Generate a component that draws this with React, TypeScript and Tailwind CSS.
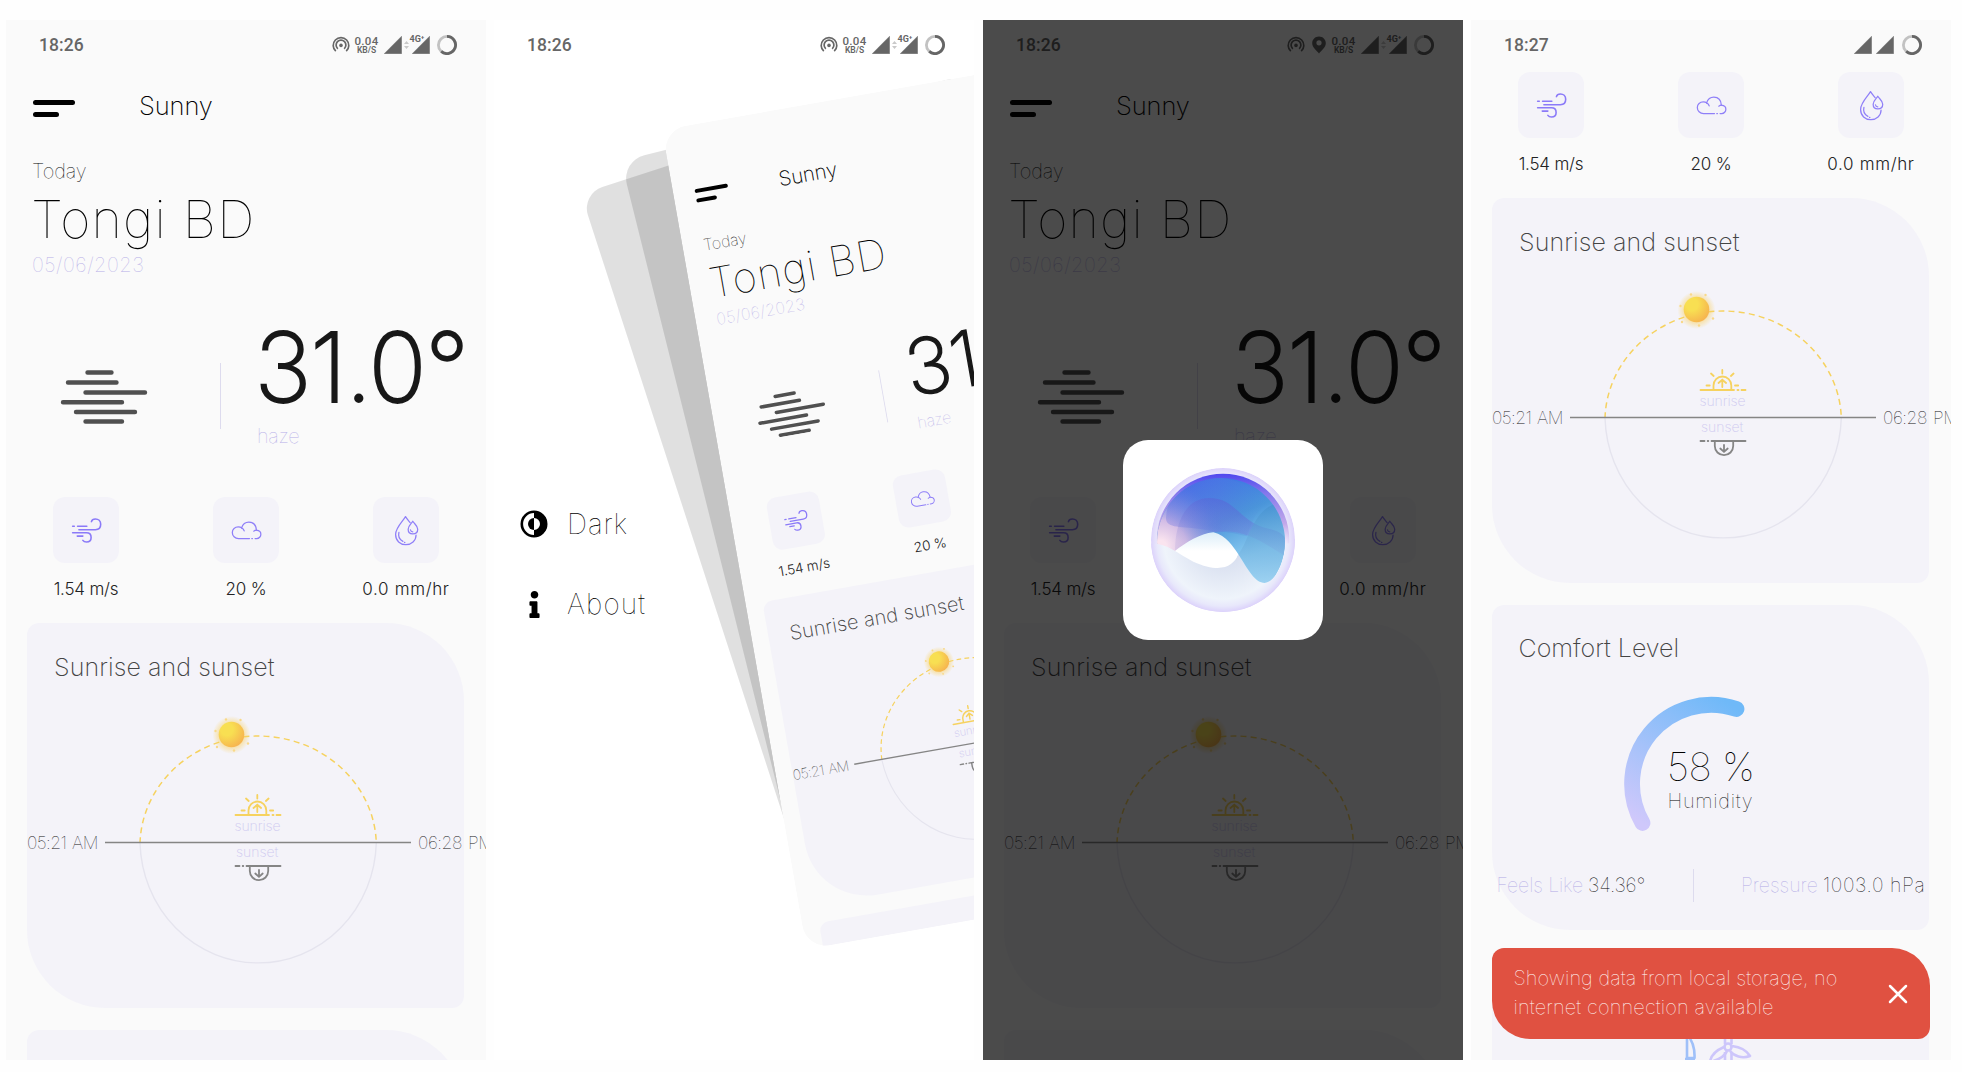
import React from 'react';
import { FaInfo } from 'react-icons/fa';

function HotspotIcon() {
  return (
    <svg viewBox="0 0 18 18" className="h-[18px] w-[18px]" fill="none" stroke="#666" strokeWidth="1.7">
      <path d="M3.8 15.2A7.8 7.8 0 1 1 14.2 15.2" />
      <path d="M5.8 12.8A4.9 4.9 0 1 1 12.2 12.8" />
      <circle cx="9" cy="9.4" r="1.8" fill="#666" stroke="none" />
    </svg>
  );
}

function PinIcon() {
  return (
    <svg viewBox="0 0 14 18" className="h-[18px] w-[14px]">
      <path fillRule="evenodd" fill="#666" d="M7 0.5C3.2 0.5 0.2 3.4 0.2 7.2C0.2 11.4 4.6 14.2 7 17.5C9.4 14.2 13.8 11.4 13.8 7.2C13.8 3.4 10.8 0.5 7 0.5ZM7 4.2A2.6 2.6 0 1 1 7 9.4A2.6 2.6 0 1 1 7 4.2Z" />
    </svg>
  );
}

function Signal() {
  return (
    <svg viewBox="0 0 18 18" className="h-[18px] w-[18px] shrink-0">
      <path d="M17.6 0.2V17.7H0.2Z" fill="#666" stroke="#666" strokeWidth="0.4" strokeLinejoin="round" />
    </svg>
  );
}

function BatteryRing() {
  return (
    <svg viewBox="0 0 20 20" className="h-5 w-5 shrink-0" fill="none" strokeWidth="2.8">
      <circle cx="10" cy="10" r="8.6" stroke="#c2c2c2" />
      <path d="M10 1.4A8.6 8.6 0 1 1 4.2 16.4" stroke="#666" />
    </svg>
  );
}

function StatusBar({ time, pin = false, simple = false }: { time: string; pin?: boolean; simple?: boolean }) {
  return (
    <div className="flex h-[50px] w-[480px] shrink-0 items-center pr-[29.5px] pl-[33px] font-[Roboto] text-[#666]">
      <span className="text-[17.5px] leading-5 font-medium tracking-[0.1px]">{time}</span>
      <div className="ml-auto flex items-center">
        {!simple && (
          <>
            <HotspotIcon />
            {pin && <span className="ml-[7px]"><PinIcon /></span>}
            <span className={pin ? 'ml-[5px] w-[26px] text-center' : 'ml-[4px] w-[26px] text-center'}>
              <span className="block text-[11.5px] leading-[9px] font-medium tracking-[0.3px]">0.04</span>
              <span className="block text-[8.5px] leading-[8px] font-semibold">KB/S</span>
            </span>
            <span className="ml-1 flex"><Signal /></span>
            <svg viewBox="0 0 5 8" className="ml-[2px] h-2 w-[5px]" fill="#c9c9c9">
              <path d="M2.5 0L5 3H0ZM2.5 8L0 5H5Z" />
            </svg>
            <span className="relative ml-[3px] flex">
              <Signal />
              <span className="absolute -top-[1px] -left-[2px] text-[9px] leading-[9px] font-bold">4G⁺</span>
            </span>
            <span className="ml-[7px] flex"><BatteryRing /></span>
          </>
        )}
        {simple && (
          <>
            <Signal />
            <span className="ml-1 flex"><Signal /></span>
            <span className="ml-[8px] flex"><BatteryRing /></span>
          </>
        )}
      </div>
    </div>
  );
}

function WindIcon() {
  return (
    <svg viewBox="118 101 100 100" className="h-[33px] w-[33px]" fill="none" stroke="#8b7af8" strokeWidth="4.8" strokeLinecap="round">
      <path d="M126 138H131M141 138H169M145 148.5H195C205 148.5 211 142 211 132C211 122 204 116 195 116C188 116 184 120 183 124" />
      <path d="M126 158H168C177 158 182 163 182 172C182 181 177 186 168 186C162 186 159 184 157 181M140 168H157" />
    </svg>
  );
}

function CloudIcon() {
  return (
    <svg viewBox="598 101 100 100" className="h-[33px] w-[33px]" fill="none" stroke="#8f7ff8" strokeWidth="3.8" strokeLinecap="round">
      <path d="M657 175.5H624C613 175.5 605 167 605 157C605 147 613 140 623 140C627 140 631 141 633 143C637 131 645 125.5 655 125.5C668 125.5 677 135 678 150C686 151 691.5 156 691.5 162C691.5 169 686 175.5 679 175.5H674" />
      <path d="M633 143C637 145 640 148 641 152M670 153C673 151 675 150 678 150M664 175.5H666" />
    </svg>
  );
}

function DropsIcon() {
  return (
    <svg viewBox="1078 101 100 100" className="h-[33px] w-[33px]" fill="none" stroke="#8f7ff8" strokeWidth="3.8" strokeLinecap="round" strokeLinejoin="round">
      <path d="M1139 127C1134 121 1130 117 1125 109C1118 122 1095 142 1095 163C1095 182 1109 194 1126 194C1143 194 1157 182 1157 165" />
      <path d="M1147 123C1142 131 1133 137 1133 147C1133 156 1139 161 1147 161C1155 161 1162 156 1162 147C1162 137 1152 131 1147 123Z" />
      <path d="M1105 157C1102 170 1109 180 1117 184M1122 187H1123M1140 149C1141 153 1143 155 1147 155" />
    </svg>
  );
}

function Stats() {
  const items = [
    { icon: <WindIcon />, label: '1.54 m/s', cls: 'tracking-[-0.2px]' },
    { icon: <CloudIcon />, label: '20 %', cls: 'tracking-[-0.2px]' },
    { icon: <DropsIcon />, label: '0.0 mm/hr', cls: 'tracking-[0.65px]' },
  ];
  return (
    <div className="grid w-[480px] grid-cols-3">
      {items.map((it) => (
        <div key={it.label} className="flex flex-col items-center">
          <div className="flex h-[66px] w-[66px] items-center justify-center rounded-[12px] bg-[#f4f3f9]">{it.icon}</div>
          <span className={`mt-[16px] text-[17px] leading-5 font-light whitespace-nowrap text-[#222] ${it.cls}`}>{it.label}</span>
        </div>
      ))}
    </div>
  );
}

function SunChart() {
  return (
    <svg viewBox="0 0 437 384" className="absolute inset-0 h-[384px] w-[437px]" fill="none">
      <defs>
        <radialGradient id="sunBody" cx="0.32" cy="0.3" r="0.8">
          <stop offset="0.3" stopColor="#f8df52" />
          <stop offset="1" stopColor="#f6b04e" />
        </radialGradient>
        <radialGradient id="sunGlow">
          <stop offset="0.6" stopColor="#f9cf5a" stopOpacity="0.55" />
          <stop offset="1" stopColor="#f9cf5a" stopOpacity="0" />
        </radialGradient>
      </defs>
      <path d="M113 220A118.2 123.500 0 0 0 349.3 220" stroke="#e5e4ee" strokeWidth="1.4" />
      <path d="M113 220A118.2 113 0 0 1 349.3 220" transform="translate(0 5.500) scale(1 0.975)" stroke="#f6d25f" strokeWidth="1.5" strokeDasharray="6 4.2" />
      <path d="M78 219.5H384" stroke="#858585" strokeWidth="1.6" />
      <circle cx="204.5" cy="112" r="19" fill="url(#sunGlow)" />
      <g fill="#f9d98a">
        <circle cx="199" cy="96.5" r="1.2" /><circle cx="213.5" cy="97" r="1.2" /><circle cx="188.5" cy="108" r="1.2" />
        <circle cx="190" cy="124" r="1.2" /><circle cx="221" cy="120.5" r="1.2" /><circle cx="207" cy="127.5" r="1.2" />
      </g>
      <circle cx="204.5" cy="111.5" r="12.8" fill="url(#sunBody)" />
      <g stroke="#f6d25f" strokeWidth="1.8" strokeLinecap="round">
        <path d="M208.5 192H242M245.5 192H246.5M249.5 192H253.5" />
        <path d="M221.5 191V187.5A8.9 9 0 0 1 239.3 187.5V191" />
        <path d="M230.3 189V182.5M226.5 185L230.3 181.7L234.1 185" />
        <path d="M230.3 172V175.5M219 175.5L221.7 178M241.6 175.5L238.9 178M214.5 187.5H217.7M243 187.5H246.2" />
      </g>
      <g stroke="#858585" strokeWidth="1.8" strokeLinecap="round">
        <path d="M208.5 243H212.5M215.7 243H216.3M219.5 243H253.5" />
        <path d="M222.8 243.5V248A9.2 9.2 0 0 0 241.2 248V243.5" />
        <path d="M232 247V253.5M228.3 250.5L232 253.8L235.7 250.5" />
      </g>
    </svg>
  );
}

function SunCard() {
  return (
    <div className="relative ml-[21px] flex h-[384.5px] w-[437px] shrink-0 flex-col rounded-[12px] rounded-tr-[78px] rounded-bl-[78px] bg-[#f4f3f9]">
      <SunChart />
      <h2 className="mt-[29px] ml-[27px] text-[25px] leading-[30px] font-extralight tracking-[0.1px] whitespace-nowrap text-[#444]">Sunrise and sunset</h2>
      <span className="mt-[136px] ml-[207.5px] text-[14px] leading-4 font-extralight tracking-[-0.1px] text-[#cfcaf0]">sunrise</span>
      <div className="flex h-[18px] items-center justify-between whitespace-nowrap">
        <span className="w-[76px] text-[17.5px] leading-[18px] font-thin tracking-[-0.6px] text-[#111] [word-spacing:1.5px]">05:21 AM</span>
        <span className="-mr-[30px] w-[76px] text-[17.5px] leading-[18px] font-thin tracking-[-0.45px] text-[#111] [word-spacing:1.5px]">06:28 PM</span>
      </div>
      <span className="-mt-[8px] ml-[209px] text-[14px] leading-4 font-extralight text-[#cfcaf0]">sunset</span>
    </div>
  );
}

function HazeIcon() {
  return (
    <svg viewBox="0 0 88 56" className="h-[56px] w-[88px]" stroke="#505050" strokeWidth="4.4" strokeLinecap="round">
      <path d="M27.5 4.5H51.5M8 14.5H56.5M25.5 24.5H85M3 34.3H62M16 44H75M25.5 53.5H62" />
    </svg>
  );
}

function Home({ status }: { status?: React.ReactNode }) {
  return (
    <div className="flex h-[1040px] w-[480px] flex-col overflow-hidden bg-[#fafafa] text-black">
      {status ?? <div className="h-[50px] shrink-0" />}
      <header className="mt-5 flex h-8 shrink-0 items-center pl-[27px]">
        <div className="mt-[5px] flex flex-col gap-[7px]">
          <span className="h-[5px] w-[42px] rounded-full bg-black" />
          <span className="h-[5px] w-[26px] rounded-full bg-black" />
        </div>
        <span className="ml-[64px] text-[25.5px] leading-8 font-extralight tracking-[-0.1px]">Sunny</span>
      </header>
      <div className="mt-[37px] flex flex-col pl-[26px] whitespace-nowrap">
        <span className="text-[20px] leading-6 font-thin tracking-[-0.1px]">Today</span>
        <span className="mt-[7px] -ml-px text-[52px] leading-[60px] font-thin tracking-[1.2px]">Tongi BD</span>
        <span className="mt-[3px] text-[20px] leading-6 font-thin tracking-[0.5px] text-[#b7afe8]">05/06/2023</span>
      </div>
      <div className="mt-[40px] flex h-[131px] shrink-0 items-start">
        <div className="mt-[51px] ml-[54px]"><HazeIcon /></div>
        <div className="mt-[46px] ml-[72px] h-[66px] w-px bg-[#dddbee]" />
        <div className="ml-[35px] flex flex-col whitespace-nowrap">
          <span className="-ml-[1.5px] text-[96px] leading-[100px] font-[250] tracking-[-1.2px] text-[#181818] [-webkit-text-stroke:1.8px_#181818]">31.0°</span>
          <span className="mt-[7px] ml-[1px] text-[20px] leading-6 font-thin tracking-[-0.4px] text-[#b7afe8]">haze</span>
        </div>
      </div>
      <div className="mt-[49px]"><Stats /></div>
      <div className="mt-[24px] shrink-0"><SunCard /></div>
      <div className="mt-[22px] ml-[21px] h-[320px] w-[437px] shrink-0 rounded-[12px] rounded-tr-[78px] rounded-bl-[78px] bg-[#f4f3f9]" />
    </div>
  );
}

function MenuPanel() {
  return (
    <section className="relative h-[1040px] w-[480px] shrink-0 overflow-hidden bg-white">
      <div className="flex flex-col">
        <StatusBar time="18:26" />
        <nav className="mt-[437px] flex flex-col gap-[48px] pl-[26px] text-[28px] leading-8 font-thin">
          <span className="flex items-center">
            <svg viewBox="0 0 28 28" className="h-7 w-7">
              <circle cx="14" cy="14" r="12.2" fill="#fff" stroke="#000" strokeWidth="2.6" />
              <path d="M14 1A13 13 0 0 1 14 27V20A6 6 0 0 0 14 8Z" />
              <path d="M14 8A6 6 0 0 0 14 20Z" />
            </svg>
            <span className="mt-[1px] ml-[19px] tracking-[0.9px]">Dark</span>
          </span>
          <span className="flex items-center">
            <span className="flex w-7 justify-center"><FaInfo size={27} /></span>
            <span className="ml-[19px] tracking-[1.1px]">About</span>
          </span>
        </nav>
      </div>
      <div className="absolute top-[174px] left-[87px] h-[1040px] w-[480px] origin-top-left scale-[0.7] -rotate-[18deg] rounded-[32px] bg-black/12" />
      <div className="absolute top-[141px] left-[126.5px] h-[1040px] w-[480px] origin-top-left scale-[0.75] -rotate-[14deg] rounded-[32px] bg-black/12" />
      <div className="absolute top-[110px] left-[167.5px] origin-top-left scale-[0.8] -rotate-[10deg] overflow-hidden rounded-[30px]">
        <Home />
      </div>
    </section>
  );
}

function Orb() {
  return (
    <svg viewBox="153 113 432 432" className="h-36 w-36">
      <defs>
        <clipPath id="orbOuter"><circle cx="369" cy="329" r="216" /></clipPath>
        <clipPath id="orbInner"><circle cx="363" cy="335" r="192" /></clipPath>
        <radialGradient id="halo"><stop offset="0.88" stopColor="#fff" /><stop offset="0.93" stopColor="#e6e3fb" /><stop offset="1" stopColor="#dcd2fb" /></radialGradient>
        <linearGradient id="rim" x1="0" y1="0" x2="0" y2="1"><stop offset="0" stopColor="#4f48ee" /><stop offset="0.15" stopColor="#8478ec" /><stop offset="0.38" stopColor="#c3a9ea" /><stop offset="0.62" stopColor="#e6dcf8" stopOpacity="0" /></linearGradient>
        <linearGradient id="sky" x1="0.4" y1="0" x2="0.75" y2="0.85"><stop offset="0" stopColor="#3264ea" /><stop offset="0.12" stopColor="#3d72e6" /><stop offset="0.42" stopColor="#4a96da" /><stop offset="0.75" stopColor="#8ccdf1" /><stop offset="1" stopColor="#a4d8f5" /></linearGradient>
        <radialGradient id="blush" gradientUnits="userSpaceOnUse" cx="180" cy="350" r="200"><stop offset="0.1" stopColor="#fae4ef" /><stop offset="0.4" stopColor="#e3c3e6" stopOpacity="0.9" /><stop offset="0.75" stopColor="#9f9ae4" stopOpacity="0.4" /><stop offset="1" stopColor="#5b78e6" stopOpacity="0" /></radialGradient>
        <linearGradient id="dome" gradientUnits="userSpaceOnUse" x1="340" y1="203" x2="300" y2="350"><stop offset="0" stopColor="#5b5fd6" stopOpacity="0.45" /><stop offset="0.55" stopColor="#7378d8" stopOpacity="0.35" /><stop offset="1" stopColor="#b9a9dc" stopOpacity="0.3" /></linearGradient>
        <linearGradient id="band" gradientUnits="userSpaceOnUse" x1="190" y1="0" x2="520" y2="0"><stop offset="0" stopColor="#6f74e0" stopOpacity="0.35" /><stop offset="0.5" stopColor="#5b7be0" stopOpacity="0.4" /><stop offset="1" stopColor="#4a8fd8" stopOpacity="0" /></linearGradient>
        <linearGradient id="lobe" gradientUnits="userSpaceOnUse" x1="0" y1="220" x2="0" y2="458"><stop offset="0" stopColor="#3f8ccb" stopOpacity="0.5" /><stop offset="1" stopColor="#9bd0f0" stopOpacity="0.8" /></linearGradient>
        <linearGradient id="lens" x1="0" y1="0" x2="0" y2="1"><stop offset="0" stopColor="#dceef9" /><stop offset="0.5" stopColor="#fff" /></linearGradient>
        <radialGradient id="bowl" gradientUnits="userSpaceOnUse" cx="369" cy="329" r="216"><stop offset="0.3" stopColor="#d9e0f0" /><stop offset="0.82" stopColor="#eff4fb" /><stop offset="0.92" stopColor="#e8e8fb" /><stop offset="1" stopColor="#dcd2fb" /></radialGradient>
      </defs>
      <g clipPath="url(#orbOuter)">
        <circle cx="369" cy="329" r="216" fill="url(#halo)" />
        <circle cx="369" cy="329" r="199" fill="url(#rim)" />
        <g clipPath="url(#orbInner)">
          <path d="M150 540V110H580V540Z" fill="url(#sky)" />
          <path d="M150 540V110H580V540Z" fill="url(#blush)" />
          <path d="M198 262C200 225 215 190 245 170C320 110 460 150 520 225C470 220 455 280 440 318C410 310 385 303 342 305C300 290 225 295 208 282C200 277 198 270 198 262Z" fill="url(#band)" />
          <path d="M225 362C225 290 250 203 328 203C410 203 420 280 510 296C535 303 550 310 560 330V380C500 345 450 303 370 303C310 303 270 330 225 362Z" fill="url(#dome)" />
          <path d="M560 215C490 215 465 270 442 320C432 345 425 358 415 372C440 410 465 458 494 458C525 455 555 400 560 330Z" fill="url(#lobe)" />
        </g>
        <path d="M222 364C260 335 300 310 340 306C380 316 400 350 415 372C408 410 375 420 340 418C300 412 250 385 222 364Z" fill="url(#lens)" />
        <path d="M150 340C195 335 230 368 280 394C360 430 400 410 415 372C445 420 465 458 494 458C525 455 552 400 557 340C575 340 580 330 590 320V550H150Z" fill="url(#bowl)" />
      </g>
    </svg>
  );
}

function ComfortCard() {
  return (
    <div className="relative ml-[21px] flex h-[325px] w-[437px] shrink-0 flex-col rounded-[12px] rounded-tr-[78px] rounded-bl-[78px] bg-[#f4f3f9] whitespace-nowrap">
      <svg viewBox="0 0 437 325" className="absolute inset-0 h-[325px] w-[437px]" fill="none">
        <defs>
          <linearGradient id="gauge" gradientUnits="userSpaceOnUse" x1="160" y1="225" x2="240" y2="100">
            <stop offset="0" stopColor="#cfc8fb" />
            <stop offset="0.45" stopColor="#a5c2fa" />
            <stop offset="1" stopColor="#6fb9f8" />
          </linearGradient>
        </defs>
        <path d="M150.5 218A79 79 0 0 1 244.5 104" stroke="url(#gauge)" strokeWidth="15.8" strokeLinecap="round" />
      </svg>
      <h2 className="mt-[28px] ml-[26.5px] text-[25px] leading-[30px] font-extralight text-[#444]">Comfort Level</h2>
      <span className="mt-[80px] ml-[175px] text-[39px] leading-[48px] font-thin tracking-[-0.4px]">58 %</span>
      <span className="-mt-[2px] ml-[175.5px] text-[20px] leading-6 font-thin tracking-[0.7px]">Humidity</span>
      <div className="mt-[56px] flex h-[33px] items-center text-[19.5px] font-thin">
        <span className="ml-[4.5px] w-[91.5px] tracking-[-0.1px] text-[#b3abe6]">Feels Like</span>
        <span className="w-[105px] tracking-[-0.2px]">34.36°</span>
        <span className="h-[33px] w-px bg-[#dddbee]" />
        <span className="ml-[47px] w-[82px] text-[#b3abe6]">Pressure</span>
        <span className="tracking-[0.6px]">1003.0 hPa</span>
      </div>
    </div>
  );
}

function Alert() {
  return (
    <div className="absolute top-[928px] left-[21px] flex h-[91px] w-[438px] items-center rounded-[12px] rounded-tr-[38px] rounded-bl-[38px] bg-[#e05141] pr-[22px] pl-[21.5px] text-white">
      <p className="-mt-[1px] w-[350px] text-[20px] leading-[29.5px] font-thin tracking-[0.05px] whitespace-nowrap">
        Showing data from local storage, no
        <br />
        <span className="tracking-[0.15px]">internet connection available</span>
      </p>
      <svg viewBox="0 0 20 20" className="ml-auto h-5 w-5" stroke="#fff" strokeWidth="2.5" strokeLinecap="round">
        <path d="M2 2L18 18M18 2L2 18" />
      </svg>
    </div>
  );
}

function ScrolledPanel() {
  return (
    <section className="relative flex h-[1040px] w-[480px] shrink-0 flex-col overflow-hidden bg-[#fafafa] text-black">
      <StatusBar time="18:27" simple />
      <div className="mt-[2px]"><Stats /></div>
      <div className="mt-[24px] shrink-0"><SunCard /></div>
      <div className="mt-[22.5px] shrink-0"><ComfortCard /></div>
      <div className="mt-[22px] ml-[21px] h-[300px] w-[437px] shrink-0 rounded-[12px] rounded-tr-[78px] bg-[#f4f3f9]">
        <svg viewBox="0 0 437 110" className="h-[110px] w-[437px]" fill="none" strokeWidth="2.6" strokeLinejoin="round">
          <path d="M195 82V106H202.5C203 96 200 88 195 82ZM193 107H203" stroke="#9fc0f9" />
          <g stroke="#cdc6fb">
            <path d="M233 70V92M239.5 70V92M233 100V112M239.5 100V112" />
            <circle cx="236" cy="95" r="3.5" />
            <path d="M240 94C248 95 255 99 258 104C250 107 242 104 238 99M232 95C225 98 219 102 218 110C226 108 233 104 235 99" />
          </g>
        </svg>
      </div>
      <Alert />
    </section>
  );
}

export default function App() {
  return (
    <main className="flex h-[1072px] w-[1962px] overflow-hidden bg-[#fefefe] pt-5 pl-[6px] font-[Inter,sans-serif]">
      <section className="shrink-0"><Home status={<StatusBar time="18:26" />} /></section>
      <div className="ml-2 shrink-0"><MenuPanel /></div>
      <section className="relative ml-[9px] h-[1040px] w-[480px] shrink-0">
        <Home status={<StatusBar time="18:26" pin />} />
        <div className="absolute inset-0 flex items-center justify-center bg-black/70">
          <div className="flex h-[200px] w-[200px] items-center justify-center rounded-[25px] bg-white"><Orb /></div>
        </div>
      </section>
      <div className="ml-2 shrink-0"><ScrolledPanel /></div>
    </main>
  );
}
